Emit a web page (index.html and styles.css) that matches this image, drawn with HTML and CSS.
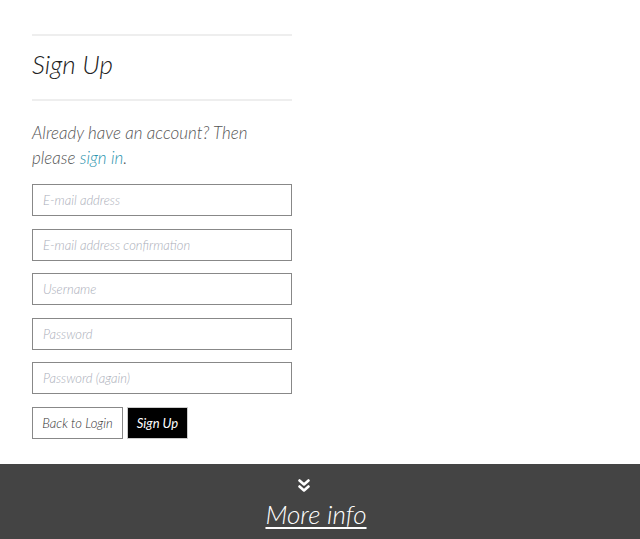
FILE: index.html
```html
<!DOCTYPE html>
<html>
<head>
<meta charset="utf-8">
<link rel="stylesheet" href="styles.css">
</head>
<body>
<main class="content">
  <hr class="rule rule-top">
  <h1 class="title">Sign Up</h1>
  <hr class="rule">
  <p class="lead">Already have an account? Then please <a class="link" href="#">sign in</a>.</p>
  <form class="form">
    <input class="field" type="email" placeholder="E-mail address">
    <input class="field" type="email" placeholder="E-mail address confirmation">
    <input class="field" type="text" placeholder="Username">
    <input class="field" type="password" placeholder="Password">
    <input class="field" type="password" placeholder="Password (again)">
    <div class="actions">
      <button class="btn btn-light" type="button">Back to Login</button>
      <button class="btn btn-dark" type="submit">Sign Up</button>
    </div>
  </form>
</main>
<footer class="footer">
  <svg class="chev" width="12" height="14" viewBox="0 0 12 14" aria-hidden="true">
    <path d="M1.5 1.5 L6 5.5 L10.5 1.5" fill="none" stroke="#fff" stroke-width="2.6" stroke-linecap="round" stroke-linejoin="round"/>
    <path d="M1.5 7.5 L6 11.5 L10.5 7.5" fill="none" stroke="#fff" stroke-width="2.6" stroke-linecap="round" stroke-linejoin="round"/>
  </svg>
  <a class="more" href="#">More info</a>
</footer>
</body>
</html>
```
FILE: styles.css
```css
html, body {
  margin: 0;
  padding: 0;
  background: #fff;
}
body {
  font-family: Lato, "Open Sans", sans-serif;
  font-style: italic;
  font-weight: 300;
  color: #555;
}
.content {
  width: 260px;
  padding: 34px 0 0 32px;
  height: 430px;
}
.rule {
  border: 0;
  border-top: 2px solid #eeeeee;
  margin: 0;
}
.title {
  margin: 13px 0 20px;
  font-size: 26px;
  font-weight: 300;
  font-style: italic;
  color: #222;
  line-height: 30px;
}
.lead {
  margin: 19px 0 14px;
  font-size: 17px;
  line-height: 25px;
  color: #555;
}
.link {
  color: #2a93ad;
  text-decoration: none;
}
.form {
  display: flex;
  flex-direction: column;
  gap: 12.5px;
}
.field {
  box-sizing: border-box;
  width: 260px;
  height: 32px;
  margin: 0;
  border: 1px solid #888;
  border-radius: 0;
  padding: 0 10px;
  font-family: Lato, sans-serif;
  font-style: italic;
  font-weight: 300;
  font-size: 13px;
  color: #333;
  outline: none;
}
.field::placeholder {
  color: #a9adb8;
}
.actions {
  display: flex;
  gap: 4px;
}
.btn {
  box-sizing: border-box;
  height: 32px;
  margin: 0;
  font-family: Lato, sans-serif;
  font-style: italic;
  font-weight: 300;
  font-size: 13px;
  border-radius: 0;
  cursor: pointer;
}
.btn-light {
  width: 91px;
  background: #fff;
  color: #333;
  border: 1px solid #888;
  padding: 0;
}
.btn-dark {
  width: 61px;
  background: #000;
  color: #fff;
  border: 1px solid #ccc;
  font-weight: 400;
  padding: 0;
}
.footer {
  background: #444;
  height: 75px;
  display: flex;
  flex-direction: column;
  align-items: center;
  padding-top: 15px;
  box-sizing: border-box;
}
.chev {
  display: block;
  margin-left: -32px;
}
.more {
  color: #fff;
  font-size: 26px;
  font-weight: 300;
  font-style: italic;
  text-decoration: underline;
  text-decoration-thickness: 2px;
  text-underline-offset: 3px;
  line-height: 36px;
  margin-top: 3px;
  margin-left: -8px;
}
```
